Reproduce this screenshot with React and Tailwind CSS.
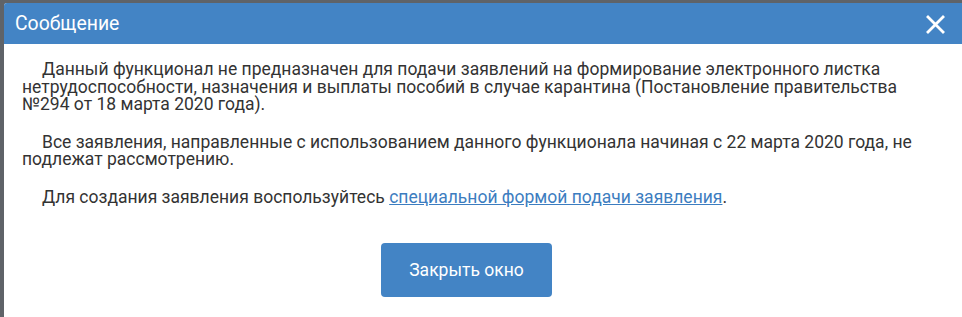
import React from "react";

export default function App() {
  return (
    <div className="w-[962px] h-[317px] bg-[#5f6368] pt-[3px] pl-[4px] overflow-hidden" style={{ fontFamily: "Roboto, 'Liberation Sans', sans-serif" }}>
      <div className="w-[980px] h-[330px] bg-white rounded-tl-[3px] overflow-hidden">
        <div className="h-[41px] bg-[#4384c5] flex items-center justify-between pl-[11px] pr-[39px]">
          <span className="text-white text-[19.4px]">Сообщение</span>
          <svg width="19" height="19" viewBox="0 0 19 19" className="mt-[1px]">
            <path d="M2 2 L17 17 M17 2 L2 17" stroke="#fff" strokeWidth="2.8" strokeLinecap="square" />
          </svg>
        </div>
        <div className="pl-[18px] pt-[17px] text-[17.5px] leading-[17.5px] text-[#333]">
          <p className="indent-[20px] w-[892px]">
            Данный функционал не предназначен для подачи заявлений на формирование электронного листка нетрудоспособности, назначения и выплаты пособий в случае карантина (Постановление правительства №294 от 18 марта 2020 года).
          </p>
          <p className="indent-[20px] w-[892px] mt-[20px]">
            Все заявления, направленные с использованием данного функционала начиная с 22 марта 2020 года, не подлежат рассмотрению.
          </p>
          <p className="indent-[20px] w-[892px] mt-[20px]">
            Для создания заявления воспользуйтесь{" "}
            <a href="#" className="text-[#3c7dc0] underline">специальной формой подачи заявления</a>.
          </p>
        </div>
        <div className="w-[925px] flex justify-center pt-[37px]">
          <button className="w-[171px] h-[54px] bg-[#4384c5] rounded-[4px] text-white text-[17.5px]">Закрыть окно</button>
        </div>
      </div>
    </div>
  );
}
